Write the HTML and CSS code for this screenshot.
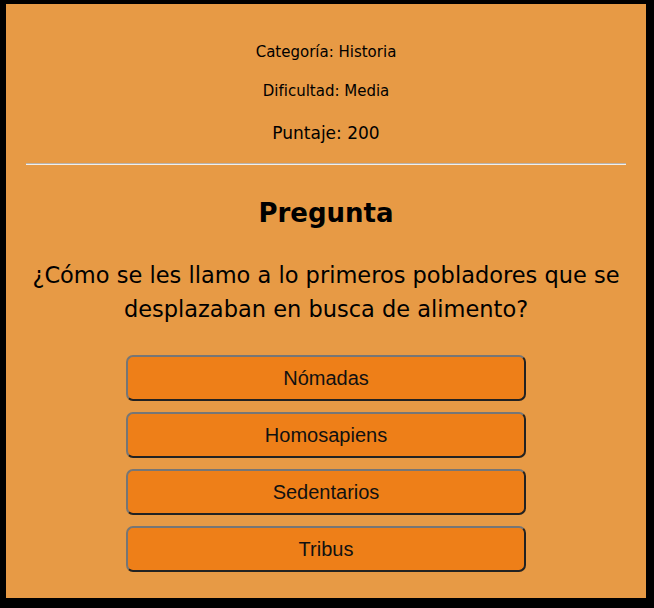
FILE: index.html
```html
<!DOCTYPE html>
<html lang="es">
<head>
<meta charset="utf-8">
<title>Pregunta</title>
<link rel="stylesheet" href="styles.css">
</head>
<body>
<main class="card">
  <section class="info">
    <p class="info-line">Categoría: Historia</p>
    <p class="info-line">Dificultad: Media</p>
    <p class="info-line score">Puntaje: 200</p>
  </section>
  <hr class="divider">
  <h1 class="title">Pregunta</h1>
  <p class="question">¿Cómo se les llamo a lo primeros pobladores que se desplazaban en busca de alimento?</p>
  <div class="answers">
    <button class="answer">Nómadas</button>
    <button class="answer">Homosapiens</button>
    <button class="answer">Sedentarios</button>
    <button class="answer">Tribus</button>
  </div>
</main>
</body>
</html>
```

FILE: styles.css
```css
html, body {
  margin: 0;
  padding: 0;
  background: #000;
}
body {
  padding: 4px 8px 10px 6px;
}
.card {
  box-sizing: border-box;
  width: 640px;
  height: 594px;
  background: #e79a45;
  padding: 38px 20px 0;
  font-family: "Comic Sans MS", "DejaVu Sans", sans-serif;
  color: #000;
  text-align: center;
}
.info {
  display: flex;
  flex-direction: column;
  align-items: center;
}
.info-line {
  margin: 0 0 19px;
  font-size: 15px;
  line-height: 20px;
}
.info-line.score {
  font-size: 17px;
  line-height: 22px;
  margin-top: 2px;
}
.divider {
  margin: 0;
  border: 0;
  border-top: 1px solid #b9b4ae;
  border-bottom: 1px solid #f4efe9;
  height: 0;
}
.title {
  margin: 30px 0 27px;
  font-size: 26px;
  line-height: 36px;
  font-weight: bold;
}
.question {
  margin: 0 auto;
  font-size: 22.5px;
  line-height: 34px;
}
.answers {
  display: flex;
  flex-direction: column;
  align-items: center;
  gap: 11px;
  margin-top: 29px;
}
.answer {
  box-sizing: border-box;
  width: 400px;
  height: 46px;
  background: #ee7f18;
  border: 2px solid #767676;
  border-right-color: #222;
  border-bottom-color: #222;
  border-radius: 7px;
  font-family: "Liberation Sans", Arial, sans-serif;
  font-size: 20px;
  color: #111;
  padding: 0;
}
```
